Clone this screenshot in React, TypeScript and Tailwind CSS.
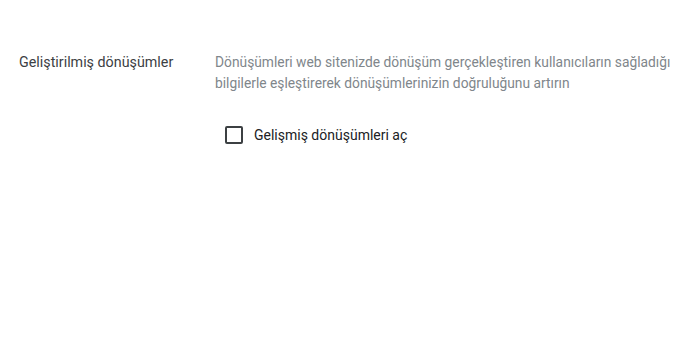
export default function App() {
  return (
    <div className="w-[700px] h-[350px] bg-white font-['Roboto',sans-serif] overflow-hidden">
      <div className="flex pt-[52px] pl-[19px]">
        <div className="w-[196px] shrink-0 text-[14.3px] leading-[20px] text-[#3c4043]">
          Geliştirilmiş dönüşümler
        </div>
        <div className="flex-1">
          <p className="text-[13.8px] leading-[21px] text-[#80868b] whitespace-nowrap">
            Dönüşümleri web sitenizde dönüşüm gerçekleştiren kullanıcıların sağladığı
            <br />
            bilgilerle eşleştirerek dönüşümlerinizin doğruluğunu artırın
          </p>
          <label className="flex items-center gap-[11px] mt-[31px] ml-[10px]">
            <span className="w-[18px] h-[18px] rounded-[2px] border-2 border-[#3c4043] shrink-0" />
            <span className="text-[14px] leading-[20px] text-[#202124]">Gelişmiş dönüşümleri aç</span>
          </label>
        </div>
      </div>
    </div>
  );
}
